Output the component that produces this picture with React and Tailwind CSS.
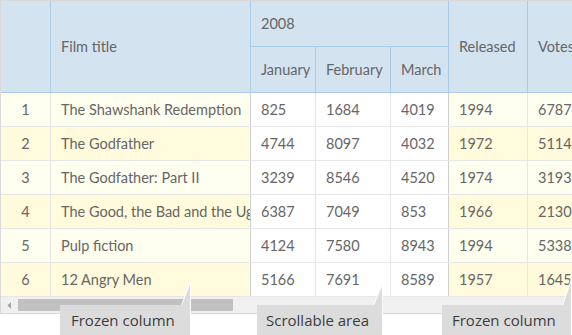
const rows = [
  ["1", "The Shawshank Redemption", "825", "1684", "4019", "1994", "678790"],
  ["2", "The Godfather", "4744", "8097", "4032", "1972", "511495"],
  ["3", "The Godfather: Part II", "3239", "8546", "4520", "1974", "319352"],
  ["4", "The Good, the Bad and the Ugly", "6387", "7049", "853", "1966", "213030"],
  ["5", "Pulp fiction", "4124", "7580", "8943", "1994", "533848"],
  ["6", "12 Angry Men", "5166", "7691", "8589", "1957", "164558"],
];

function Row({ r, i }) {
  const fz = i % 2 === 0 ? "bg-[#fffff0]" : "bg-[#fffbdc]";
  return (
    <div className="flex h-[34px] border-b border-[#e6e6e6]">
      <div className={`w-[50px] shrink-0 border-r border-[#e6e6e6] flex items-center justify-center ${fz}`}>{r[0]}</div>
      <div className={`w-[200px] shrink-0 border-r border-[#cfcfcf] flex items-center pl-[10px] overflow-hidden whitespace-nowrap ${fz}`}>{r[1]}</div>
      <div className="w-[65px] shrink-0 border-r border-[#e6e6e6] flex items-center pl-[10px] bg-white">{r[2]}</div>
      <div className="w-[75px] shrink-0 border-r border-[#e6e6e6] flex items-center pl-[10px] bg-white">{r[3]}</div>
      <div className="w-[58px] shrink-0 border-r border-[#cfcfcf] flex items-center pl-[10px] bg-white">{r[4]}</div>
      <div className={`w-[79px] shrink-0 border-r border-[#e6e6e6] flex items-center pl-[10px] ${fz}`}>{r[5]}</div>
      <div className={`w-[100px] shrink-0 border-r border-[#e6e6e6] flex items-center pl-[10px] overflow-hidden whitespace-nowrap ${fz}`}>{r[6]}</div>
    </div>
  );
}

export default function App() {
  return (
    <div className="relative w-[572px] h-[335px] overflow-hidden bg-white text-[#666] text-[14.5px] font-[Lato,sans-serif]">
      <div className="w-[640px] border border-[#d9d9d9]">
        <div className="flex h-[92px] bg-[#d3e3f0] border-b border-[#a9cbe5]">
          <div className="w-[50px] shrink-0 border-r border-[#a9cbe5]" />
          <div className="w-[200px] shrink-0 border-r border-[#a9cbe5] flex items-center pl-[10px]">Film title</div>
          <div className="w-[198px] shrink-0 flex flex-col">
            <div className="h-[46px] border-b border-r border-[#a9cbe5] flex items-center pl-[10px]">2008</div>
            <div className="flex flex-1">
              <div className="w-[65px] shrink-0 border-r border-[#a9cbe5] flex items-center pl-[10px]">January</div>
              <div className="w-[75px] shrink-0 border-r border-[#a9cbe5] flex items-center pl-[10px]">February</div>
              <div className="w-[58px] shrink-0 border-r border-[#a9cbe5] flex items-center pl-[10px]">March</div>
            </div>
          </div>
          <div className="w-[79px] shrink-0 border-r border-[#a9cbe5] flex items-center pl-[10px]">Released</div>
          <div className="w-[100px] shrink-0 border-r border-[#a9cbe5] flex items-center pl-[10px]">Votes</div>
        </div>
        {rows.map((r, i) => (
          <Row key={i} r={r} i={i} />
        ))}
        <div className="h-[16px] bg-[#f0f0f0] flex items-center">
          <div className="w-[17px] shrink-0 flex justify-center">
            <svg width="5" height="7" viewBox="0 0 5 7">
              <path d="M4 0 L0.5 3.5 L4 7 Z" fill="#a3a3a3" />
            </svg>
          </div>
          <div className="w-[215px] h-[12px] bg-[#c1c1c1]" />
        </div>
      </div>

      <svg className="absolute inset-0 pointer-events-none" width="572" height="335">
        <polygon points="60,305 182,305 190,283 190,340 60,340" fill="#dcdcdc" />
        <polyline points="181.5,305.3 190.5,282 190.5,340" fill="none" stroke="#fff" strokeWidth="1" />
        <polygon points="257,305 374,305 382,285 382,340 257,340" fill="#dcdcdc" />
        <polyline points="373.5,305.3 382.5,284 382.5,340" fill="none" stroke="#fff" strokeWidth="1" />
        <polygon points="442,305 563,305 571,280 571,340 442,340" fill="#dcdcdc" />
        <polyline points="562.5,305.3 571.5,279 571.5,340" fill="none" stroke="#fff" strokeWidth="1" />
      </svg>
      <div className="absolute left-[60px] top-[305px] h-[30px] flex items-center pl-[11px] text-[15px] text-[#3c3c3c] font-['Open_Sans',sans-serif]">Frozen column</div>
      <div className="absolute left-[257px] top-[305px] h-[30px] flex items-center pl-[9px] text-[15px] text-[#3c3c3c] font-['Open_Sans',sans-serif]">Scrollable area</div>
      <div className="absolute left-[442px] top-[305px] h-[30px] flex items-center pl-[10px] text-[15px] text-[#3c3c3c] font-['Open_Sans',sans-serif]">Frozen column</div>
    </div>
  );
}
